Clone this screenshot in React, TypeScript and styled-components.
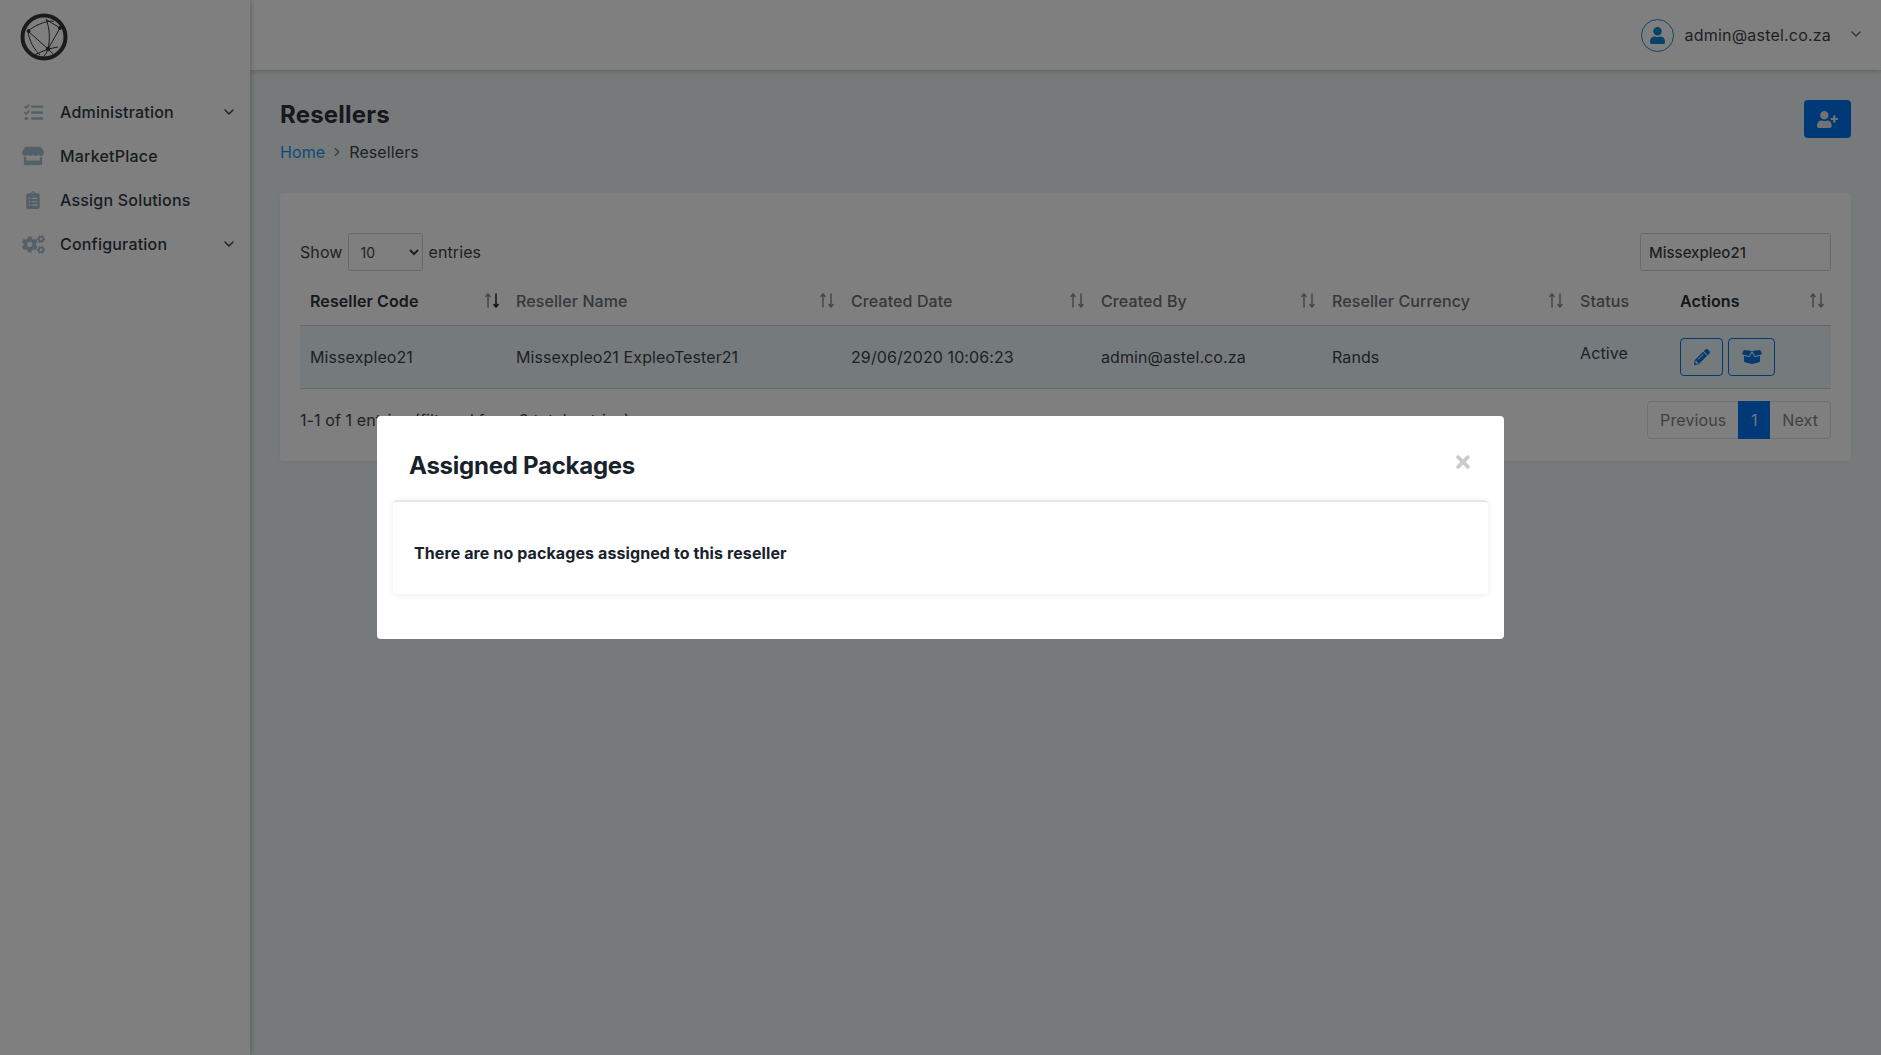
import React from 'react';
import styled, { createGlobalStyle } from 'styled-components';
import { FaTasks, FaStore, FaClipboardList, FaCogs, FaUserPlus, FaPencilAlt, FaBoxOpen, FaUser, FaTimes } from 'react-icons/fa';
import { FiChevronDown, FiChevronRight } from 'react-icons/fi';

const GlobalStyle = createGlobalStyle`
  html, body { margin: 0; padding: 0; height: 100%; }
  body {
    font-family: Inter, "Liberation Sans", sans-serif;
    font-size: 16px;
    letter-spacing: 0.1px;
    color: #3d4349;
    background: #eef5f7;
  }
  * { box-sizing: border-box; }
`;

const Shell = styled.div`
  display: flex;
  height: 1055px;
  overflow: hidden;
`;

const Sidebar = styled.aside`
  width: 250px;
  flex: none;
  background: #fff;
  box-shadow: 1px 0 5px rgba(0, 0, 0, 0.25);
  z-index: 2;
`;

const LogoBox = styled.div`
  height: 90px;
  padding: 13px 0 0 20px;
`;

const Nav = styled.nav`
  display: flex;
  flex-direction: column;
`;

const NavItem = styled.div`
  height: 44px;
  display: flex;
  align-items: center;
  padding: 0 13px 0 21px;
  font-weight: 500;
  font-size: 16px;
  letter-spacing: 0.2px;
  color: #2f3a44;
`;

const NavIcon = styled.span<{ $size: number }>`
  width: 24px;
  margin-right: 15px;
  flex: none;
  display: flex;
  justify-content: center;
  color: #a9c1cf;
  font-size: ${(p) => p.$size}px;
`;

const NavLabel = styled.span`
  flex: 1;
`;

const NavCaret = styled(FiChevronDown)`
  font-size: 16px;
  color: #2f3a44;
`;

const Main = styled.div`
  flex: 1;
  display: flex;
  flex-direction: column;
  min-width: 0;
`;

const Header = styled.header`
  height: 70px;
  flex: none;
  background: #fff;
  box-shadow: 0 1px 5px rgba(0, 0, 0, 0.25);
  display: flex;
  justify-content: flex-end;
  align-items: center;
  padding-right: 17px;
`;

const Avatar = styled.span`
  width: 33px;
  height: 33px;
  border-radius: 50%;
  border: 1px solid #1d8fd0;
  color: #0b86cf;
  display: flex;
  align-items: center;
  justify-content: center;
  font-size: 17px;
`;

const UserName = styled.span`
  margin: 0 17px 0 11px;
  font-size: 16px;
  letter-spacing: 0.2px;
  color: #3d4349;
`;

const UserCaret = styled(FiChevronDown)`
  font-size: 16px;
  color: #5c636a;
  margin-bottom: 2px;
`;

const Content = styled.main`
  padding: 30px 30px 0;
`;

const TitleRow = styled.div`
  display: flex;
  justify-content: space-between;
  align-items: flex-start;
  height: 93px;
`;

const PageTitle = styled.h1`
  margin: 1px 0 0;
  font-size: 24px;
  line-height: 28px;
  font-weight: 700;
  letter-spacing: 0.2px;
  color: #2a3138;
`;

const Crumbs = styled.div`
  display: flex;
  align-items: center;
  gap: 5px;
  margin-top: 13px;
  font-size: 16px;
  line-height: 20px;
`;

const CrumbLink = styled.a`
  color: #1a93ee;
`;

const CrumbSep = styled(FiChevronRight)`
  font-size: 14px;
  color: #6d7378;
`;

const AddButton = styled.button`
  width: 47px;
  height: 38px;
  border: 0;
  border-radius: 4px;
  background: #0072f0;
  color: #e6e6e6;
  font-size: 21px;
  display: flex;
  align-items: center;
  justify-content: center;
`;

const Card = styled.section`
  height: 268px;
  background: #fff;
  border-radius: 4px;
  padding: 40px 20px 0;
  box-shadow: 0 1px 4px rgba(0, 0, 0, 0.06);
`;

const ToolRow = styled.div`
  display: flex;
  justify-content: space-between;
  align-items: center;
`;

const ShowEntries = styled.label`
  display: flex;
  align-items: center;
  gap: 6px;
`;

const ShowLabel = styled.span`
  margin-right: -1px;
`;

const PageSize = styled.select`
  width: 75px;
  height: 38px;
  padding: 0 8px;
  border: 1px solid #cfd4d8;
  border-radius: 3px;
  background: #fff;
  color: #3d4349;
  font: inherit;
  font-size: 14px;
`;

const SearchInput = styled.input`
  width: 191px;
  height: 38px;
  padding: 0 8px;
  border: 1px solid #cfd4d8;
  border-radius: 3px;
  color: #3d4349;
  font: inherit;
  font-size: 15px;
  font-weight: 500;
`;

const Table = styled.table`
  width: 100%;
  margin-top: 10px;
  border-collapse: collapse;
  table-layout: fixed;
`;

const HeadCell = styled.th<{ $active?: boolean }>`
  height: 44px;
  padding: 0 6px 4px 10px;
  text-align: left;
  font-size: 16px;
  font-weight: ${(p) => (p.$active ? 600 : 500)};
  color: ${(p) => (p.$active ? '#2a3138' : '#6a7076')};
  border-bottom: 1px solid #c9ced2;
`;

const HeadInner = styled.div`
  display: flex;
  justify-content: space-between;
  align-items: center;
`;

const Row = styled.tr`
  background: #eaf5fb;
`;

const Cell = styled.td`
  height: 63px;
  padding: 0 10px;
  border-bottom: 1px solid #c9ced2;
`;

const StatusCell = styled(Cell)`
  padding-bottom: 8px;
`;

const Actions = styled.div`
  display: flex;
  gap: 5px;
`;

const ActionButton = styled.button<{ $wide?: boolean }>`
  width: ${(p) => (p.$wide ? 47 : 43)}px;
  height: 38px;
  padding: 0;
  border: 1px solid #0a74e0;
  border-radius: 4px;
  background: transparent;
  color: #0a74e0;
  font-size: ${(p) => (p.$wide ? 20 : 16)}px;
  display: flex;
  align-items: center;
  justify-content: center;
`;

const FootRow = styled.div`
  display: flex;
  justify-content: space-between;
  align-items: center;
  margin-top: 12px;
`;

const Pager = styled.div`
  display: flex;
  height: 38px;
  border: 1px solid #dde1e4;
  border-radius: 4px;
  color: #7d8388;
`;

const PagerItem = styled.span<{ $active?: boolean }>`
  display: flex;
  align-items: center;
  justify-content: center;
  min-width: 32px;
  padding: 0 12px;
  margin: ${(p) => (p.$active ? '-1px 0' : '0')};
  background: ${(p) => (p.$active ? '#0072f0' : 'transparent')};
  color: ${(p) => (p.$active ? '#e6e6e6' : 'inherit')};
`;

const Overlay = styled.div`
  position: fixed;
  inset: 0;
  z-index: 10;
  background: rgba(0, 0, 0, 0.5);
  display: flex;
  justify-content: center;
  align-items: flex-start;
  padding-top: 416px;
`;

const Modal = styled.div`
  position: relative;
  width: 1127px;
  height: 223px;
  padding: 0 16px;
  background: #fff;
  border-radius: 4px;
`;

const ModalHeader = styled.div`
  height: 84px;
  padding: 35px 16px 0;
`;

const ModalTitle = styled.h2`
  margin: 0;
  font-size: 24px;
  line-height: 30px;
  font-weight: 700;
  letter-spacing: -0.25px;
  color: #18222b;
`;

const CloseMark = styled.span`
  position: absolute;
  top: 36px;
  right: 31px;
  font-size: 20px;
  display: flex;
  color: #cbcbcb;
`;

const ModalBody = styled.div`
  height: 94px;
  padding: 41px 21px 0;
  border-top: 2px solid #e4e8ee;
  border-radius: 4px;
  box-shadow: 0 1px 6px rgba(0, 0, 0, 0.08);
  line-height: 20px;
  font-weight: 700;
  color: #18222b;
`;

const SortArrows: React.FC<{ on?: boolean }> = ({ on }) => (
  <svg width="16" height="15" viewBox="0 0 16 15" fill="none" strokeWidth="1.5">
    <path d="M4 14.5V1M1.5 4L4 1l2.5 3" stroke="#8b9094" />
    <path d="M12 .5V14M9.5 11l2.5 3 2.5-3" stroke={on ? '#1f262c' : '#8b9094'} />
  </svg>
);

const Logo = () => (
  <svg width="48" height="48" viewBox="0 0 48 48" fill="none" stroke="#33373a">
    <circle cx="24" cy="24" r="21.5" strokeWidth="4" />
    <g strokeWidth="1">
      <path d="M8 18C18 10 28 8 34 8M26 6c4 10 4 20 2 30 -1 4-4 7-6 9" />
      <path d="M8 18c1 10 6 18 12 24M8 18l20 18 10-2M28 36L40 15 27 7" />
      <path d="M28 36l-14 6M28 36l7 7" />
    </g>
    <circle cx="8.5" cy="18" r="1.5" fill="#33373a" />
    <circle cx="28" cy="36" r="1.8" fill="#33373a" />
    <circle cx="40" cy="15" r="1.5" fill="#33373a" />
  </svg>
);

const columns = [
  { title: 'Reseller Code', width: 206, active: true, on: true },
  { title: 'Reseller Name', width: 335 },
  { title: 'Created Date', width: 250 },
  { title: 'Created By', width: 231 },
  { title: 'Reseller Currency', width: 248 },
  { title: 'Status', width: 100, noSort: true },
  { title: 'Actions', width: 161, active: true },
];

const navItems = [
  { label: 'Administration', icon: <FaTasks />, size: 19, caret: true },
  { label: 'MarketPlace', icon: <FaStore />, size: 22 },
  { label: 'Assign Solutions', icon: <FaClipboardList />, size: 18 },
  { label: 'Configuration', icon: <FaCogs />, size: 23, caret: true },
];

const App: React.FC = () => (
  <>
    <GlobalStyle />
    <Shell>
      <Sidebar>
        <LogoBox>
          <Logo />
        </LogoBox>
        <Nav>
          {navItems.map((item) => (
            <NavItem key={item.label}>
              <NavIcon $size={item.size}>{item.icon}</NavIcon>
              <NavLabel>{item.label}</NavLabel>
              {item.caret && <NavCaret />}
            </NavItem>
          ))}
        </Nav>
      </Sidebar>
      <Main>
        <Header>
          <Avatar>
            <FaUser />
          </Avatar>
          <UserName>admin@astel.co.za</UserName>
          <UserCaret />
        </Header>
        <Content>
          <TitleRow>
            <div>
              <PageTitle>Resellers</PageTitle>
              <Crumbs>
                <CrumbLink>Home</CrumbLink>
                <CrumbSep />
                <span>Resellers</span>
              </Crumbs>
            </div>
            <AddButton>
              <FaUserPlus />
            </AddButton>
          </TitleRow>
          <Card>
            <ToolRow>
              <ShowEntries>
                <ShowLabel>Show</ShowLabel>
                <PageSize defaultValue="10">
                  <option>10</option>
                  <option>25</option>
                  <option>50</option>
                </PageSize>
                entries
              </ShowEntries>
              <SearchInput defaultValue="Missexpleo21" />
            </ToolRow>
            <Table>
              <colgroup>
                {columns.map((c) => (
                  <col key={c.title} width={c.width} />
                ))}
              </colgroup>
              <thead>
                <tr>
                  {columns.map((c) => (
                    <HeadCell key={c.title} $active={c.active}>
                      <HeadInner>
                        {c.title}
                        {!c.noSort && <SortArrows on={c.on} />}
                      </HeadInner>
                    </HeadCell>
                  ))}
                </tr>
              </thead>
              <tbody>
                <Row>
                  <Cell>Missexpleo21</Cell>
                  <Cell>Missexpleo21 ExpleoTester21</Cell>
                  <Cell>29/06/2020 10:06:23</Cell>
                  <Cell>admin@astel.co.za</Cell>
                  <Cell>Rands</Cell>
                  <StatusCell>Active</StatusCell>
                  <Cell>
                    <Actions>
                      <ActionButton>
                        <FaPencilAlt />
                      </ActionButton>
                      <ActionButton $wide>
                        <FaBoxOpen />
                      </ActionButton>
                    </Actions>
                  </Cell>
                </Row>
              </tbody>
            </Table>
            <FootRow>
              <div>1-1 of 1 entries (filtered from 8 total entries)</div>
              <Pager>
                <PagerItem>Previous</PagerItem>
                <PagerItem $active>1</PagerItem>
                <PagerItem>Next</PagerItem>
              </Pager>
            </FootRow>
          </Card>
        </Content>
      </Main>
    </Shell>
    <Overlay>
      <Modal>
        <ModalHeader>
          <ModalTitle>Assigned Packages</ModalTitle>
          <CloseMark>
            <FaTimes />
          </CloseMark>
        </ModalHeader>
        <ModalBody>There are no packages assigned to this reseller</ModalBody>
      </Modal>
    </Overlay>
  </>
);

export default App;
